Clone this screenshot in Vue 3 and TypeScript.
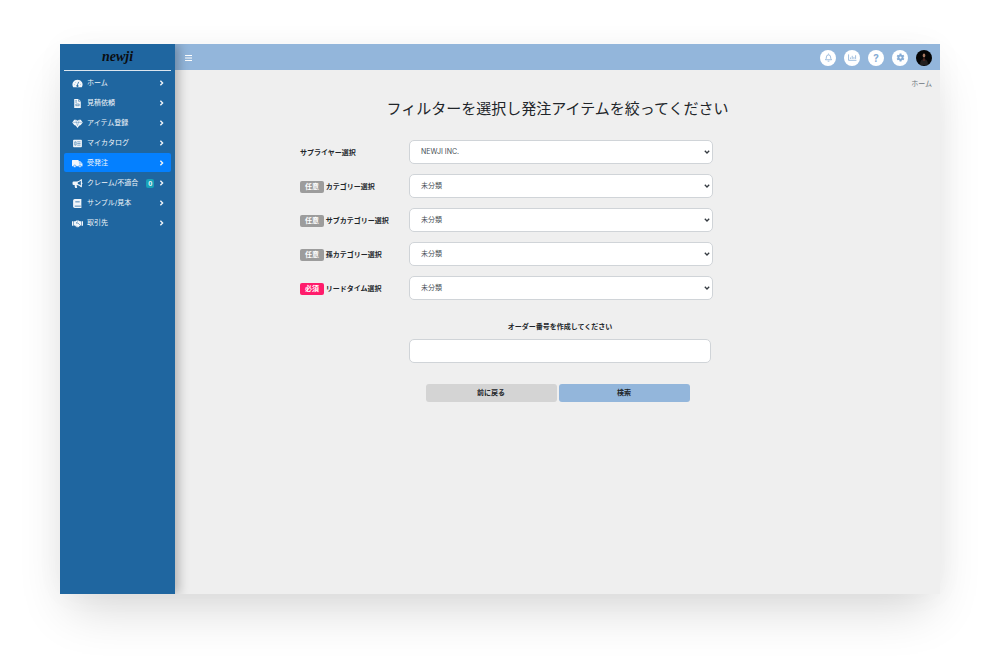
<script setup lang="ts">
import { ref } from 'vue'

interface MenuItem {
  label: string
  icon: string
  badge?: number
  active?: boolean
}

interface Filter {
  id: string
  label: string
  tag?: string
  required?: boolean
  options: string[]
}

const menu: MenuItem[] = [
  { label: 'ホーム', icon: 'gauge' },
  { label: '見積依頼', icon: 'file' },
  { label: 'アイテム登録', icon: 'gem' },
  { label: 'マイカタログ', icon: 'catalog' },
  { label: '受発注', icon: 'truck', active: true },
  { label: 'クレーム/不適合', icon: 'horn', badge: 0 },
  { label: 'サンプル/見本', icon: 'book' },
  { label: '取引先', icon: 'hands' },
]

const filters: Filter[] = [
  { id: 'supplier', label: 'サプライヤー選択', options: ['NEWJI INC.'] },
  { id: 'category', label: 'カテゴリー選択', tag: '任意', options: ['未分類'] },
  { id: 'subcategory', label: 'サブカテゴリー選択', tag: '任意', options: ['未分類'] },
  { id: 'third', label: '孫カテゴリー選択', tag: '任意', options: ['未分類'] },
  { id: 'leadtime', label: 'リードタイム選択', tag: '必須', required: true, options: ['未分類'] },
]

const orderNumber = ref('')
</script>

<template>
  <div class="page">
    <div class="frame">
      <aside class="sidebar">
        <a class="brand" href="#">newji</a>
        <nav class="menu">
          <a v-for="item in menu" :key="item.label" href="#" class="item" :class="{ active: item.active }">
            <svg class="icon" viewBox="0 0 20 16" aria-hidden="true">
              <template v-if="item.icon === 'gauge'">
                <path fill="currentColor" d="M10 1a9 9 0 0 0-8 13.4q.3.6 1 .6h14q.7 0 1-.6A9 9 0 0 0 10 1z" />
                <path class="cut" d="M9 12.5l3.2-7.5M4.5 10h.6M6 5.8l.5.5M15 10h.6" />
                <circle class="hole" cx="10" cy="12.5" r="1.9" />
              </template>
              <template v-else-if="item.icon === 'file'">
                <path fill="currentColor" d="M4 0h8l4 4v12H4z" />
                <path class="cut thin" d="M12 0v4h4M6 3h3M6 5.500h3M7 9h6v3H7z" />
              </template>
              <template v-else-if="item.icon === 'gem'">
                <path fill="currentColor" d="M4 1h3.500L10 3l2.500-2H16l3.500 5L16 10.500l-3 1.500-3 4-3-4-3-1.500L.5 6z" />
                <path class="cut faint" d="M2 6h16M7 2l1 4 2 6 2-6 1-4" />
              </template>
              <template v-else-if="item.icon === 'catalog'">
                <rect x="2" y="1" width="16" height="14" rx="1.500" fill="currentColor" />
                <path class="cut thin" d="M5 5h2.500v6H5zM9.500 5h6M9.500 8h6M9.500 11h6" />
              </template>
              <template v-else-if="item.icon === 'truck'">
                <path fill="currentColor" d="M1 1.500h11V4h3l4 4v5H1q-1 0-1-1V2.500q0-1 1-1z" />
                <path class="cut faint" d="M13.500 5.500h1.200l2.600 2.600h-3.800z" />
                <circle class="wheel" cx="5" cy="13" r="2.200" />
                <circle class="wheel" cx="14.500" cy="13" r="2.200" />
              </template>
              <template v-else-if="item.icon === 'horn'">
                <path
                  fill="currentColor"
                  fill-rule="evenodd"
                  d="M17 0q1 0 1 1v5.300a1.700 1.700 0 0 1 0 3V14q0 1-1.500.6L13 12q-2-1.400-4.500-1.400Q8.300 13 9.500 14.500q.2 1.500-1 1.500H6Q4.500 14 4.800 10.600H3Q1 10.600 1 8.800V6.300Q1 4.500 3 4.500h5.500q2.500 0 4.500-1.500L16 .5zM16 3.200Q13.300 5.600 10.500 6v3q2.800.4 5.500 2.800z"
                />
              </template>
              <template v-else-if="item.icon === 'book'">
                <path fill="currentColor" d="M5 0h12v16H5q-3 0-3-3V3q0-3 3-3z" />
                <path class="cut" d="M6 5h8M5 12.800h11" />
              </template>
              <template v-else>
                <path fill="currentColor" d="M0 4h2.500v8H0zM17.500 4H20v8h-2.500zM3.500 4H6l2-1.500h4L14 4h2.500v7.500H15L11.500 15H8.500L5 11.500H3.500z" />
                <path class="cut thin" d="M10.500 4.500L7.500 7q1.500 1.500 3.200 0l4 4M9.500 14l-2-2" />
              </template>
            </svg>
            <span class="text">{{ item.label }}</span>
            <span v-if="item.badge !== undefined" class="count">{{ item.badge }}</span>
            <svg class="chevron" viewBox="0 0 6 8" aria-hidden="true"><path d="M1.500 1l3 3-3 3" /></svg>
          </a>
        </nav>
      </aside>

      <div class="content">
        <header class="topbar">
          <button class="toggle" type="button" aria-label="メニュー">
            <svg viewBox="0 0 8 8" aria-hidden="true"><path d="M0 1.500h7M0 4h7M0 6.500h7" /></svg>
          </button>
          <div class="actions">
            <button class="round" type="button" aria-label="通知">
              <svg viewBox="0 0 16 16" aria-hidden="true">
                <path class="line" d="M8 1v1.500M2.500 12h11q-1.800-1.500-1.800-5a3.700 3.700 0 0 0-7.400 0q0 3.500-1.800 5zM6.500 14.500h3" />
              </svg>
            </button>
            <button class="round" type="button" aria-label="グラフ">
              <svg viewBox="0 0 16 16" aria-hidden="true">
                <path class="line" d="M1 2.500V13h14M4.500 10.500V8M7.500 10.500V5M10.500 10.500V7M13.500 10.500V4" />
              </svg>
            </button>
            <button class="round help" type="button" aria-label="ヘルプ">?</button>
            <button class="round" type="button" aria-label="設定">
              <svg viewBox="0 0 16 16" aria-hidden="true">
                <path class="teeth" d="M8 1v14M2 4.500l12 7M14 4.500l-12 7" />
                <circle class="gear" cx="8" cy="8" r="3.700" />
              </svg>
            </button>
            <button class="round avatar" type="button" aria-label="アカウント">
              <svg viewBox="0 0 16 16" aria-hidden="true">
                <path fill="#24201f" d="M4 15q0-6 4-6t4 6z" />
                <ellipse cx="8" cy="5.500" rx="1.300" ry="2" fill="#a87860" />
                <path fill="#722c25" d="M7.500 8h1v3h-1z" />
              </svg>
            </button>
          </div>
        </header>

        <main class="main">
          <div class="crumb">ホーム</div>
          <h1>フィルターを選択し発注アイテムを絞ってください</h1>
          <form @submit.prevent>
            <div v-for="f in filters" :key="f.id" class="row">
              <label :for="f.id">
                <span v-if="f.tag" class="tag" :class="{ required: f.required }">{{ f.tag }}</span>
                {{ f.label }}
              </label>
              <div class="select">
                <select :id="f.id">
                  <option v-for="o in f.options" :key="o">{{ o }}</option>
                </select>
                <svg viewBox="0 0 6 4" aria-hidden="true"><path d="M.8.8L3 3 5.200.8" /></svg>
              </div>
            </div>
            <div class="row order">
              <div class="field">
                <label for="order">オーダー番号を作成してください</label>
                <input id="order" v-model="orderNumber" type="text" />
              </div>
            </div>
            <div class="buttons">
              <button type="button" class="back">前に戻る</button>
              <button type="submit" class="search">検索</button>
            </div>
          </form>
        </main>
      </div>
    </div>
  </div>
</template>

<style>
body {
  margin: 0;
  background: #fff;
}
</style>

<style scoped>
.page,
.page * {
  box-sizing: border-box;
}
.page {
  display: flex;
  min-height: 100vh;
  padding: 44px 60px 76px;
  overflow: hidden;
}
.frame {
  display: flex;
  flex: 1;
  min-width: 0;
  background: #efefef;
  box-shadow: 0 24px 48px -10px rgba(0, 0, 0, 0.16), 0 0 30px rgba(0, 0, 0, 0.03);
  font-family: Inter, 'Noto Sans CJK JP', sans-serif;
  font-size: 7px;
  line-height: 10px;
  color: #212529;
}
button,
input,
select {
  margin: 0;
  font: inherit;
  color: inherit;
}
button {
  padding: 0;
  border: 0;
  cursor: pointer;
}
a {
  color: inherit;
  text-decoration: none;
}
.sidebar {
  z-index: 1;
  flex: none;
  width: 115px;
  padding: 0 4px;
  background: #1f66a0;
  box-shadow: 4px 0 10px rgba(0, 0, 0, 0.25);
  clip-path: inset(0 -20px 0 0);
  color: #fff;
}
.brand {
  display: block;
  height: 27px;
  border-bottom: 1px solid #dce6ef;
  font: italic bold 14px/26px 'Liberation Serif', serif;
  text-align: center;
  color: #0b0d10;
}
.menu {
  display: grid;
  gap: 1px;
  padding-top: 2px;
}
.item {
  display: flex;
  align-items: center;
  height: 19px;
  padding: 1px 7px 0 8px;
  border-radius: 2px;
  color: #f2f6fa;
  --bg: #1f66a0;
}
.item.active {
  background: #0480ff;
  --bg: #0480ff;
}
.icon {
  width: 11px;
  height: 9px;
  margin-right: 4px;
}
.cut {
  fill: none;
  stroke: var(--bg);
  stroke-width: 1.4;
}
.thin {
  stroke-width: 1;
}
.faint {
  stroke-width: 0.6;
}
.hole {
  fill: var(--bg);
}
.wheel {
  fill: currentColor;
  stroke: var(--bg);
  stroke-width: 1;
}
.text {
  white-space: nowrap;
}
.count {
  width: 8px;
  margin-left: 8px;
  border-radius: 2px;
  background: #17a2b8;
  font-size: 6px;
  line-height: 9px;
  font-weight: bold;
  text-align: center;
}
.chevron {
  width: 5px;
  height: 6px;
  margin-left: auto;
}
.chevron path {
  fill: none;
  stroke: currentColor;
  stroke-width: 1.8;
}
.content {
  flex: 1;
  min-width: 0;
}
.topbar {
  display: flex;
  align-items: center;
  justify-content: space-between;
  height: 26px;
  padding: 1px 8px 0 10px;
  background: #93b6db;
}
.toggle {
  display: flex;
  background: none;
  color: #fff;
}
.toggle svg {
  width: 8px;
  height: 8px;
}
.toggle path {
  stroke: currentColor;
  stroke-width: 1;
}
.actions {
  display: flex;
  gap: 8px;
}
.round {
  display: flex;
  align-items: center;
  justify-content: center;
  width: 16px;
  height: 16px;
  border-radius: 50%;
  background: #fff;
  color: #86acd5;
}
.round svg {
  width: 9px;
  height: 9px;
}
.help {
  font-size: 10px;
  font-weight: bold;
}
.line {
  fill: none;
  stroke: currentColor;
  stroke-width: 1.4;
}
.teeth {
  stroke: currentColor;
  stroke-width: 3.4;
}
.gear {
  fill: #fff;
  stroke: currentColor;
  stroke-width: 3.4;
}
.round.avatar {
  background: #050505;
}
.round.avatar svg {
  width: 16px;
  height: 16px;
}
.crumb {
  padding: 9px 8px 0;
  text-align: right;
  color: #6c757d;
}
h1 {
  margin: 9px 0 20px;
  font-size: 15px;
  line-height: 22px;
  font-weight: normal;
  text-align: center;
}
form {
  display: grid;
  gap: 10px;
}
.row {
  display: grid;
  grid-template-columns: 125fr 109fr 304fr 227fr;
  align-items: center;
}
.row > label {
  grid-column: 2;
  padding-top: 2px;
}
label {
  font-weight: bold;
  white-space: nowrap;
}
.tag {
  display: inline-block;
  width: 24px;
  border-radius: 2px;
  background: #9c9c9c;
  line-height: 12px;
  text-align: center;
  color: #fff;
}
.tag.required {
  background: #ff1c6b;
}
.select {
  position: relative;
}
select,
input {
  display: block;
  width: 100%;
  height: 24px;
  padding: 0 11px;
  border: 1px solid #d0d4d8;
  border-radius: 5px;
  background: #fff;
  color: #495057;
}
select {
  appearance: none;
}
.select svg {
  position: absolute;
  top: 10px;
  right: 3px;
  width: 6px;
  height: 4px;
  pointer-events: none;
}
.select path {
  fill: none;
  stroke: #343a40;
  stroke-width: 1.3;
}
.order {
  padding-top: 12px;
}
.field {
  grid-column: 3;
  padding-right: 2px;
}
.field label {
  display: block;
  margin-bottom: 7px;
  text-align: center;
}
.buttons {
  display: grid;
  grid-template-columns: 1fr 1fr;
  gap: 2px;
  width: 264px;
  margin: 11px auto 0;
}
.buttons button {
  height: 18px;
  border-radius: 3px;
  font-weight: bold;
}
.back {
  background: #d4d4d4;
}
.search {
  background: #93b6db;
}
</style>
